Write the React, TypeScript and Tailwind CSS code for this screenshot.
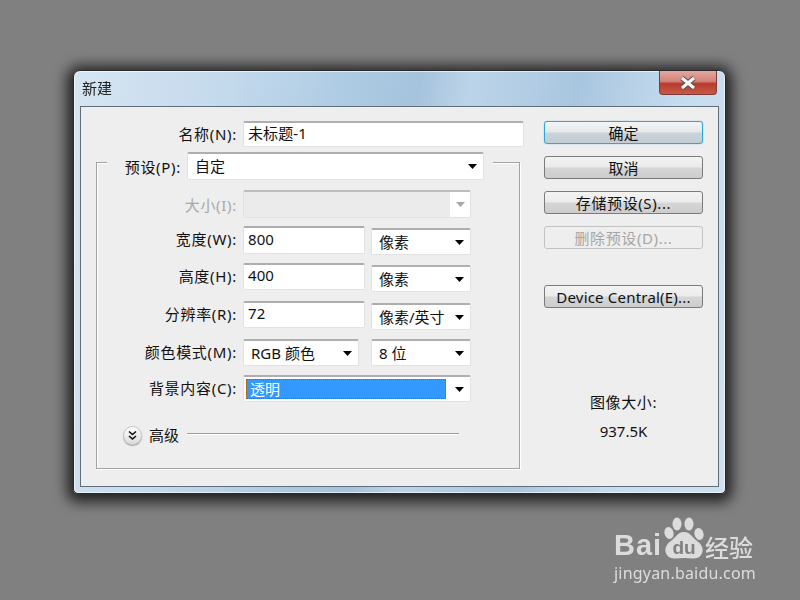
const fieldCls = 'flex items-center shrink-0 bg-white rounded-[2px] border border-[#e2e2e2] border-t-2 border-t-[#aeaeae] text-[15px] text-[#111]'
const labelCls = 'text-right text-[15px] tracking-[0.7px] whitespace-nowrap'

function Arrow({ gray }: { gray?: boolean }) {
  return (
    <svg width="9" height="5" viewBox="0 0 9 5" className="shrink-0">
      <path d="M0 0h9L4.500 5z" fill={gray ? '#a8a8a8' : '#000'} />
    </svg>
  )
}

function Field({ value, w }: { value: string; w: string }) {
  return (
    <div className={`${fieldCls} ${w} h-full pl-[4px] pb-[3px] tracking-[0.1px]`}>
      {value}
    </div>
  )
}

function Select({ value, className }: { value: string; className: string }) {
  return (
    <div className={`${fieldCls} ${className} pl-[7px] pr-[6px] justify-between`}>
      <span>{value}</span>
      <Arrow />
    </div>
  )
}

function Row({ label, children, className = '' }: { label: string; children: React.ReactNode; className?: string }) {
  return (
    <div className={`flex gap-[6px] ${className}`}>
      <div className={`w-[140px] shrink-0 ${labelCls} text-[#111] leading-[26px]`}>{label}</div>
      {children}
    </div>
  )
}

function Btn({ children, tone = 'normal', className = '' }: { children: React.ReactNode; tone?: 'normal' | 'primary' | 'off'; className?: string }) {
  const toneCls =
    tone === 'primary'
      ? 'border-[#2ea6dc] shadow-[0_0_1px_#2ea6dc] bg-[linear-gradient(#f2f4f5_0%,#e6e9ea_48%,#c9d3d8_52%,#c2cdd3_100%)] text-[#111]'
      : tone === 'off'
        ? 'border-[#c2c2c2] bg-[#eeeeee] text-[#a6a6a6]'
        : 'border-[#7b7b7b] bg-[linear-gradient(#f3f3f3_0%,#ebebeb_48%,#d6d6d6_52%,#cdcdcd_100%)] text-[#111]'
  return (
    <div className={`w-[159px] h-[23px] pt-[1px] rounded-[3px] border flex items-center justify-center text-[15px] leading-none whitespace-nowrap ${toneCls} ${className}`}>
      {children}
    </div>
  )
}

function Watermark() {
  return (
    <div className="absolute left-[614px] top-[516px] w-[144px] text-[#dcdcdc] font-['Liberation_Sans','Noto_Sans_CJK_SC',sans-serif]">
      <div className="flex items-end h-[46px]">
        <span className="w-[50px] shrink-0 text-[29px] font-bold leading-[34px] tracking-[1px]">Bai</span>
        <svg width="40" height="46" viewBox="0 0 40 46" className="shrink-0">
          <ellipse cx="5" cy="17" rx="4.500" ry="6" transform="rotate(-15 5 17)" fill="#dcdcdc" />
          <ellipse cx="13" cy="8" rx="4.500" ry="6.500" fill="#dcdcdc" />
          <ellipse cx="25" cy="8" rx="4.500" ry="6.500" fill="#dcdcdc" />
          <ellipse cx="35" cy="18" rx="4.500" ry="6" transform="rotate(-15 35 18)" fill="#dcdcdc" />
          <path d="M20 16c6 0 8 5 13 9 6 4 7 10 4 14-3 5-10 3-17 3s-14 2-17-3c-3-4-2-10 4-14 5-4 7-9 13-9z" fill="#dcdcdc" />
          <text x="20" y="38" textAnchor="middle" fontSize="19" fontWeight="700" fill="#808080">du</text>
        </svg>
        <span className="text-[24px] leading-[30px] ml-[1px] font-medium font-['Noto_Sans_CJK_SC',sans-serif] whitespace-nowrap">经验</span>
      </div>
      <div className="text-[16px] leading-[20px] mt-[1px] tracking-[0.2px] whitespace-nowrap font-['Noto_Sans',sans-serif]">jingyan.baidu.com</div>
    </div>
  )
}

export default function App() {
  return (
    <div className="relative w-[800px] h-[600px] overflow-hidden bg-[#808080] pl-[73px] pt-[70px] font-['Noto_Sans','Noto_Sans_CJK_SC',sans-serif]">
      <div className="blur-[0.3px]">
        {/* window */}
        <div className="w-[653px] h-[424px] rounded-t-[7px] rounded-b-[5px] border border-[#2a2a2a] shadow-[0_2px_14px_6px_rgba(0,0,0,0.75),inset_0_0_0_1px_rgba(255,255,255,0.6)] bg-[linear-gradient(100deg,#d6e5f2_0%,#c3d9ec_22%,#aecbe4_38%,#a6c3dd_48%,#bcd4e9_55%,#a9c6e0_70%,#c7dcee_85%,#cfe1f0_100%)] flex flex-col">
          <div className="h-[35px] shrink-0 flex justify-between pl-[8px]">
            <span className="text-[15px] text-[#222] leading-[34px]">新建</span>
            <div className="w-[58px] h-[24px] mr-[8px] rounded-b-[4px] border border-t-0 border-[#7d3a36] bg-[linear-gradient(#e4a89f_0%,#d28379_45%,#b83a2c_55%,#c8594a_100%)] flex items-center justify-center">
              <svg width="20" height="14" viewBox="0 0 20 14">
                <path d="M4 2l12 10M16 2L4 12" stroke="#4a4a4a" strokeWidth="5" />
                <path d="M4 2l12 10M16 2L4 12" stroke="#f2f2f2" strokeWidth="3.400" />
              </svg>
            </div>
          </div>

          {/* panel */}
          <div className="w-[639px] h-[381px] ml-[6px] border border-[#5f6e7b] bg-[#eeeeee] flex pl-[15px] pt-[14px]">
            <div className="w-[424px] shrink-0">
              <Row label="名称(N):" className="h-[26px] w-[429px] pl-[1px]">
                <Field value="未标题-1" w="w-[281px]" />
              </Row>

              <div className="mt-[15px] w-[424px] h-[307px] border border-[#a2a2a2] shadow-[inset_1px_1px_0_#fff,1px_1px_0_#fff]">
                <div className="-mt-[11px] ml-[10px] w-[386px] h-[28px] bg-[#eeeeee] flex gap-[6px]">
                  <div className={`w-[74px] shrink-0 ${labelCls} text-[#111] leading-[30px]`}>预设(P):</div>
                  <Select value="自定" className="w-[297px] h-[28px]" />
                </div>

                <Row label="" className="mt-[10px] h-[28px] relative">
                  <div className="w-[228px] h-[28px] bg-white rounded-[2px] border border-[#e2e2e2] border-t-2 border-t-[#bdbdbd] flex">
                    <div className="w-[206px] h-full bg-[#ebebeb]" />
                    <div className="flex-1 flex items-center justify-center"><Arrow gray /></div>
                  </div>
                  <div className={`absolute left-0 top-0 w-[140px] ${labelCls} text-[#a8a8a8] leading-[30px]`}>大小(I):</div>
                </Row>

                <Row label="宽度(W):" className="mt-[8px] h-[28px]">
                  <Field value="800" w="w-[122px]" />
                  <Select value="像素" className="w-[100px] h-[27px] mt-[2px]" />
                </Row>

                <Row label="高度(H):" className="mt-[9px] h-[27px]">
                  <Field value="400" w="w-[122px]" />
                  <Select value="像素" className="w-[100px] h-[27px] mt-[2px]" />
                </Row>

                <Row label="分辨率(R):" className="mt-[11px] h-[27px]">
                  <Field value="72" w="w-[122px]" />
                  <Select value="像素/英寸" className="w-[100px] h-[27px] mt-[2px]" />
                </Row>

                <Row label="颜色模式(M):" className="mt-[11px] h-[27px]">
                  <div className="flex gap-[12px]">
                    <Select value="RGB 颜色" className="w-[116px] h-[27px]" />
                    <Select value="8 位" className="w-[100px] h-[27px]" />
                  </div>
                </Row>

                <Row label="背景内容(C):" className="mt-[9px] h-[27px]">
                  <div className={`${fieldCls} w-[228px] h-[27px] pl-[2px] pr-[6px] justify-between`}>
                    <div className="w-[200px] h-[20px] bg-[#3399ff] border border-dotted border-[#a85c10] text-white leading-[18px] pl-[3px]">透明</div>
                    <Arrow />
                  </div>
                </Row>

                <div className="mt-[23px] ml-[26px] h-[20px] w-[336px] flex items-center">
                  <div className="w-[19px] h-[19px] rounded-full border border-[#c4c4c4] bg-[linear-gradient(#ffffff,#dcdcdc)] shadow-[0_1px_1px_#9a9a9a] flex items-center justify-center shrink-0">
                    <svg width="11" height="11" viewBox="0 0 11 11" fill="none" stroke="#111" strokeWidth="1.600">
                      <path d="M2 1.500l3.500 3 3.500-3M2 6l3.500 3 3.500-3" />
                    </svg>
                  </div>
                  <span className="ml-[7px] text-[15px] text-[#111] leading-none whitespace-nowrap">高级</span>
                  <div className="ml-[8px] flex-1 h-[1px] -mt-[3px] bg-[#9a9a9a] shadow-[0_1px_0_#fff]" />
                </div>
              </div>
            </div>

            <div className="ml-[24px] flex flex-col w-[159px]">
              <Btn tone="primary">确定</Btn>
              <Btn className="mt-[12px]">取消</Btn>
              <Btn className="mt-[12px] tracking-[0.6px]">存储预设(S)...</Btn>
              <Btn tone="off" className="mt-[12px] tracking-[0.6px]">删除预设(D)...</Btn>
              <Btn className="mt-[36px] tracking-[0.2px]">Device Central(E)...</Btn>
              <div className="mt-[83px] text-center text-[15px] tracking-[0.6px] text-[#111] leading-[22px]">图像大小:</div>
              <div className="mt-[7px] text-center text-[15px] text-[#111] leading-[22px]">937.5K</div>
            </div>
          </div>
        </div>
      </div>

      <Watermark />
    </div>
  )
}
